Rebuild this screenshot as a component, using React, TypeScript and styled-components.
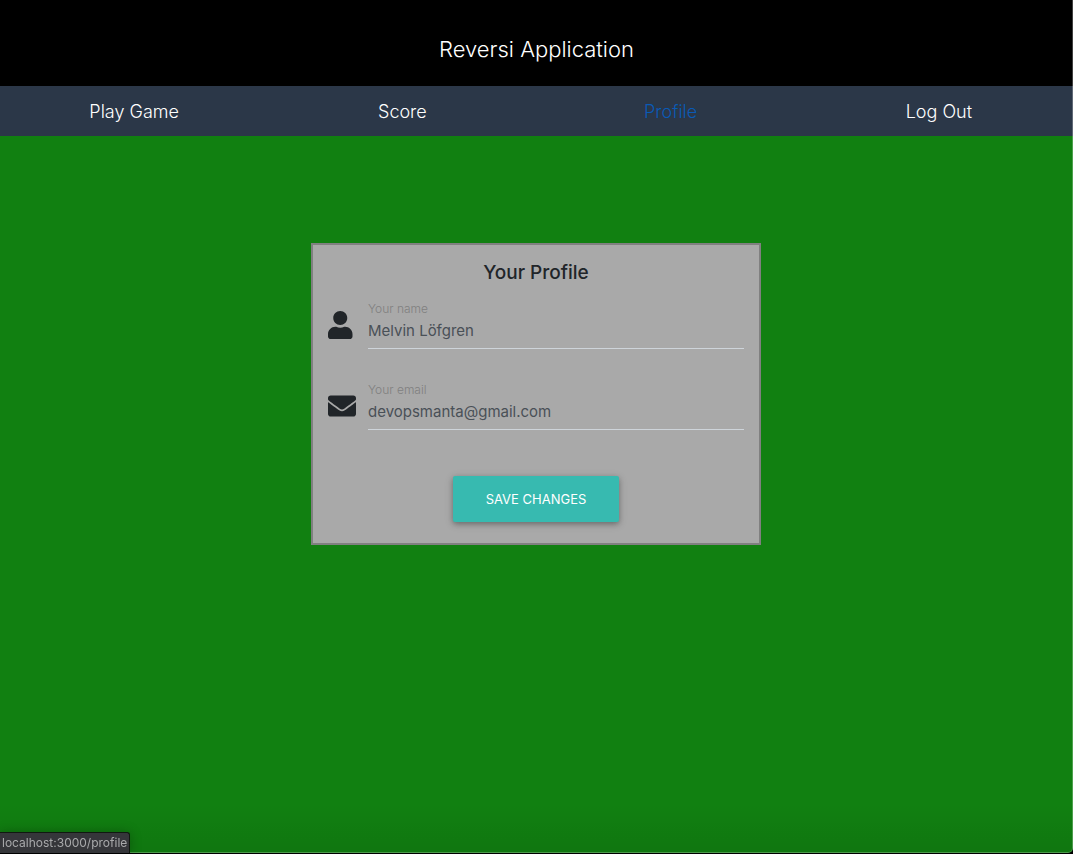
import React, { useState } from 'react';
import styled, { createGlobalStyle } from 'styled-components';
import { FaEnvelope, FaUser } from 'react-icons/fa';

const GlobalStyle = createGlobalStyle`
  *, *::before, *::after {
    box-sizing: border-box;
  }

  body {
    margin: 0;
    background: #000000;
    color: #212529;
    font-family: Inter, "Liberation Sans", sans-serif;
    font-size: 16px;
  }
`;

const Page = styled.div`
  display: flex;
  flex-direction: column;
  min-height: 100vh;
  background: linear-gradient(to top, rgba(0, 0, 0, 0.08), transparent 50px) #118011;
`;

const Header = styled.header`
  display: flex;
  align-items: center;
  justify-content: center;
  padding: 31px 16px 19px;
  background: #000000;
`;

const AppTitle = styled.h1`
  margin: 0;
  color: #ffffff;
  font-size: 22px;
  font-weight: 300;
  line-height: 36px;
`;

const Nav = styled.nav`
  display: grid;
  grid-template-columns: repeat(4, 1fr);
  background: #2b3748;
`;

const NavLink = styled.a<{ $active?: boolean }>`
  padding-top: 2px;
  color: ${({ $active }) => ($active ? '#0a5ab6' : '#ffffff')};
  font-size: 18px;
  font-weight: 300;
  line-height: 48px;
  text-align: center;
  text-decoration: none;
`;

const Main = styled.main`
  display: flex;
  flex: 1;
  align-items: flex-start;
  justify-content: center;
  padding: 107px 17px 32px 16px;
`;

const Card = styled.form`
  display: flex;
  flex-direction: column;
  width: 100%;
  max-width: 450px;
  padding: 16px 15px 21px;
  border: 2px solid #808080;
  background: #a9a9a9;
`;

const CardTitle = styled.h2`
  margin: 0 0 14px;
  font-size: 19px;
  font-weight: 500;
  line-height: 24px;
  text-align: center;
`;

const Field = styled.div`
  display: grid;
  grid-template-columns: 40px 1fr;
  align-items: center;
  margin-bottom: 31px;
`;

const FieldIcon = styled.span`
  display: flex;
  padding-top: 2px;
  font-size: 28px;
`;

const FieldBody = styled.div`
  display: flex;
  flex-direction: column;
`;

const Label = styled.label`
  color: #808080;
  font-size: 12px;
  font-weight: 300;
  line-height: 20px;
`;

const Input = styled.input`
  width: 100%;
  height: 30px;
  padding: 0 0 7px;
  border: 0;
  border-bottom: 1px solid #ced4da;
  border-radius: 0;
  background: transparent;
  color: #495057;
  font-family: inherit;
  font-size: 15px;
  outline: none;
`;

const SaveButton = styled.button`
  align-self: center;
  margin-top: 15px;
  padding: 1px 33px 0;
  border: 0;
  border-radius: 2px;
  background: #37bab0;
  box-shadow: 0 2px 5px rgba(0, 0, 0, 0.26), 0 2px 10px rgba(0, 0, 0, 0.16);
  color: #ffffff;
  cursor: pointer;
  font-family: inherit;
  font-size: 13px;
  line-height: 45px;
  text-transform: uppercase;
`;

const StatusBubble = styled.div`
  position: fixed;
  bottom: 1px;
  left: 0;
  padding: 0 2px;
  border: solid #101810;
  border-width: 1px 1px 0 0;
  border-radius: 0 3px 0 0;
  background: #35363a;
  box-shadow: 0 0 12px rgba(0, 0, 0, 0.25);
  color: #a8a9ab;
  font-size: 12px;
  line-height: 20px;
`;

const WindowEdge = styled.div`
  position: fixed;
  inset: 0 0 1px;
  border: solid rgba(255, 255, 255, 0.25);
  border-width: 0 1px 1px 0;
  border-radius: 0 0 5px 0;
  box-shadow: 0 0 0 6px #000000;
  pointer-events: none;
`;

const links = ['Play Game', 'Score', 'Profile', 'Log Out'];

export default function App() {
  const [name, setName] = useState('Melvin Löfgren');
  const [email, setEmail] = useState('devopsmanta@gmail.com');

  return (
    <>
      <GlobalStyle />
      <Page>
        <Header>
          <AppTitle>Reversi Application</AppTitle>
        </Header>
        <Nav>
          {links.map((label) => (
            <NavLink key={label} href="#" $active={label === 'Profile'}>
              {label}
            </NavLink>
          ))}
        </Nav>
        <Main>
          <Card onSubmit={(event) => event.preventDefault()}>
            <CardTitle>Your Profile</CardTitle>
            <Field>
              <FieldIcon>
                <FaUser preserveAspectRatio="xMinYMid" />
              </FieldIcon>
              <FieldBody>
                <Label htmlFor="name">Your name</Label>
                <Input id="name" type="text" value={name} onChange={(e) => setName(e.target.value)} />
              </FieldBody>
            </Field>
            <Field>
              <FieldIcon>
                <FaEnvelope preserveAspectRatio="xMinYMid" />
              </FieldIcon>
              <FieldBody>
                <Label htmlFor="email">Your email</Label>
                <Input id="email" type="email" value={email} onChange={(e) => setEmail(e.target.value)} />
              </FieldBody>
            </Field>
            <SaveButton type="submit">Save changes</SaveButton>
          </Card>
        </Main>
      </Page>
      <WindowEdge />
      <StatusBubble>localhost:3000/profile</StatusBubble>
    </>
  );
}
